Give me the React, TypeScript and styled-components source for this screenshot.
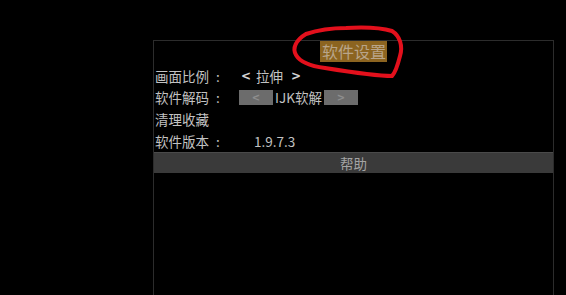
import React, { FC } from "react";
import styled, { createGlobalStyle } from "styled-components";

const GlobalStyle = createGlobalStyle`
  html, body {
    margin: 0;
    padding: 0;
    background: #000;
  }
  body {
    font-family: "Noto Sans CJK SC", "Noto Sans", sans-serif;
  }
`;

const Screen = styled.div`
  position: relative;
  width: 566px;
  height: 295px;
  overflow: hidden;
  background: #000;
  padding: 40px 0 0 153px;
  box-sizing: border-box;
`;

const Panel = styled.div`
  width: 401px;
  height: 300px;
  box-sizing: border-box;
  border: 1px solid #2c2c2c;
  border-bottom: none;
  display: flex;
  flex-direction: column;
`;

const TitleRow = styled.div`
  display: flex;
  justify-content: center;
  height: 22px;
  margin-bottom: 2px;
`;

const Title = styled.div`
  background: #8c6420;
  color: #b9a58a;
  font-size: 16px;
  line-height: 21px;
  padding: 0 1px 0 2px;
  height: 21px;
`;

const Row = styled.div`
  display: flex;
  align-items: center;
  height: 21.6px;
  padding-left: 1px;
  color: #c2c2c2;
  font-size: 13.5px;
`;

const Label = styled.span`
  width: 84px;
  flex: none;
  display: flex;
`;

const Colon = styled.span`
  margin-left: 7px;
`;

const Value = styled.span<{ $offset?: number }>`
  margin-left: ${(p) => p.$offset ?? 0}px;
  display: flex;
  align-items: center;
  gap: 2px;
`;

const Arrow = styled.span`
  font-family: "DejaVu Sans", sans-serif;
  font-weight: bold;
  font-size: 12px;
  color: #d4d4d4;
`;

const Word = styled.span`
  margin: 0 6px 0 3px;
`;

const GrayButton = styled.span`
  width: 34px;
  height: 15px;
  background: #6c6c6c;
  color: #8e8e8e;
  font-family: "DejaVu Sans", sans-serif;
  font-weight: bold;
  font-size: 10px;
  line-height: 15px;
  text-align: center;
`;

const HelpBar = styled.div`
  margin-top: 1px;
  height: 20px;
  background: #3a3a3a;
  border-top: 1px solid #4a4a4a;
  color: #a4a4a4;
  font-size: 13.5px;
  line-height: 20px;
  text-align: center;
`;

const Ring = styled.svg`
  position: absolute;
  left: 0;
  top: 0;
  pointer-events: none;
`;

const App: FC = () => (
  <>
    <GlobalStyle />
    <Screen>
      <Panel>
        <TitleRow>
          <Title>软件设置</Title>
        </TitleRow>
        <Row>
          <Label>
            画面比例<Colon>:</Colon>
          </Label>
          <Value $offset={2}>
            <Arrow>&lt;</Arrow>
            <Word>拉伸</Word>
            <Arrow>&gt;</Arrow>
          </Value>
        </Row>
        <Row>
          <Label>
            软件解码<Colon>:</Colon>
          </Label>
          <Value $offset={0}>
            <GrayButton>&lt;</GrayButton>
            <span>IJK软解</span>
            <GrayButton>&gt;</GrayButton>
          </Value>
        </Row>
        <Row>
          <Label>清理收藏</Label>
        </Row>
        <Row>
          <Label>
            软件版本<Colon>:</Colon>
          </Label>
          <Value $offset={15}>1.9.7.3</Value>
        </Row>
        <HelpBar>帮助</HelpBar>
      </Panel>
      <Ring width="566" height="295" viewBox="0 0 566 295">
        <path
          d="M306 34 C318 30 332 28 346 28 C364 27 382 28 392 31 C400 36 403 46 400 56 C398 64 396 72 392 76 C375 76 350 72 325 68 C310 66 300 62 296 55 C292 48 296 40 306 34 Z"
          fill="none"
          stroke="#e3101c"
          strokeWidth="4"
          strokeLinejoin="round"
        />
      </Ring>
    </Screen>
  </>
);

export default App;
